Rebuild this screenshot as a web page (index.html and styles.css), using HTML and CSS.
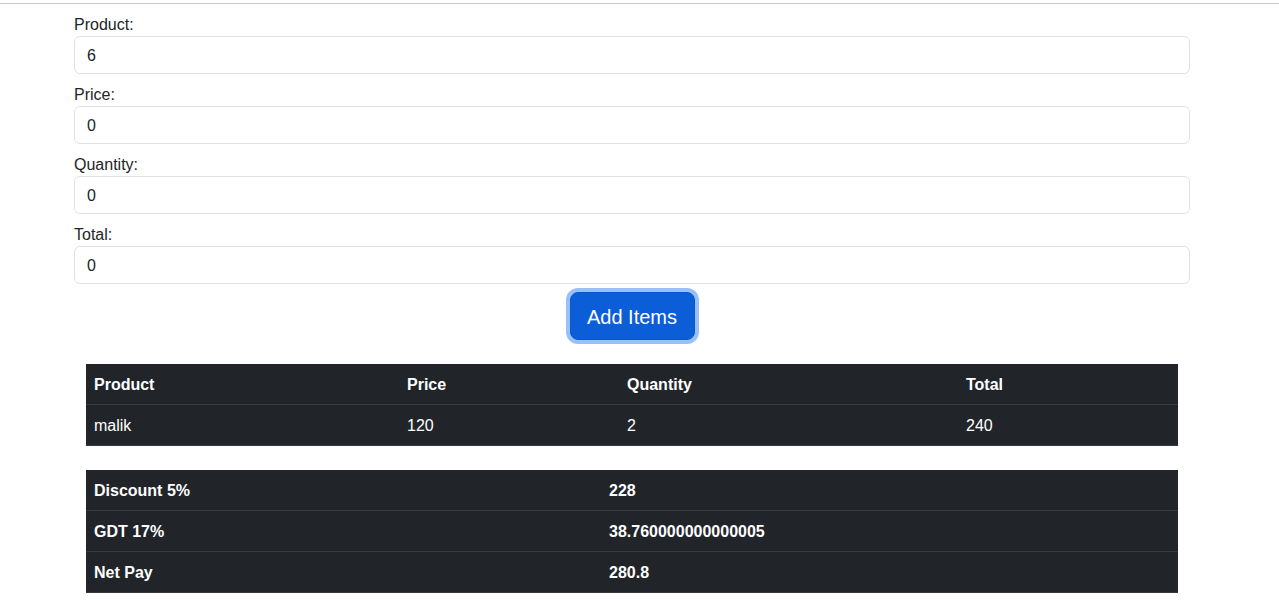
FILE: index.html
```html
<!DOCTYPE html>
<html lang="en">
<head>
<meta charset="utf-8">
<title>Items</title>
<link rel="stylesheet" href="styles.css">
</head>
<body>
<div class="topline"></div>
<div class="container">
  <form class="item-form">
    <label class="form-label" for="product">Product:</label>
    <input class="form-control" id="product" type="text" value="6">
    <label class="form-label" for="price">Price:</label>
    <input class="form-control" id="price" type="text" value="0">
    <label class="form-label" for="qty">Quantity:</label>
    <input class="form-control" id="qty" type="text" value="0">
    <label class="form-label" for="total">Total:</label>
    <input class="form-control" id="total" type="text" value="0">
    <div class="btn-row">
      <button type="button" class="btn-add">Add Items</button>
    </div>
  </form>

  <table class="table-dark items">
    <thead>
      <tr>
        <th class="c-product">Product</th>
        <th class="c-price">Price</th>
        <th class="c-qty">Quantity</th>
        <th class="c-total">Total</th>
      </tr>
    </thead>
    <tbody>
      <tr>
        <td>malik</td>
        <td>120</td>
        <td>2</td>
        <td>240</td>
      </tr>
    </tbody>
  </table>

  <table class="table-dark summary">
    <tbody>
      <tr><th class="c-label">Discount 5%</th><th>228</th></tr>
      <tr><th class="c-label">GDT 17%</th><th>38.760000000000005</th></tr>
      <tr><th class="c-label">Net Pay</th><th>280.8</th></tr>
    </tbody>
  </table>
</div>
</body>
</html>
```

FILE: styles.css
```css
* { box-sizing: border-box; }

html, body {
  margin: 0;
  padding: 0;
  background: #fff;
}

body {
  font-family: "Segoe UI", "Liberation Sans", Arial, sans-serif;
  font-size: 16px;
  line-height: 1.5;
  color: #212529;
}

.topline {
  height: 1px;
  margin-top: 3px;
  background: #c8c8c8;
}

.container {
  width: 1116px;
  margin-left: 74px;
  padding-top: 8px;
}

.item-form {
  display: flex;
  flex-direction: column;
}

.form-label {
  display: block;
  height: 24px;
  padding-top: 2px;
  line-height: 22px;
  margin-top: 8px;
}

.form-label:first-child {
  margin-top: 0;
}

.form-control {
  display: block;
  width: 100%;
  height: 38px;
  padding: 7px 12px 5px;
  font: inherit;
  color: #212529;
  background: #fff;
  border: 1px solid #dee2e6;
  border-radius: 6px;
  outline: none;
}

.btn-row {
  display: flex;
  justify-content: center;
  margin-top: 8px;
}

.btn-add {
  height: 48px;
  width: 125px;
  padding: 9px 16px 7px;
  font-family: inherit;
  font-size: 20px;
  line-height: 30px;
  color: #fff;
  background: #0b5ed7;
  border: 1px solid #0a58ca;
  border-radius: 8px;
  box-shadow: 0 0 0 4px #98c0fb;
  cursor: pointer;
}

.table-dark {
  width: 1092px;
  margin: 0 12px;
  border-collapse: collapse;
  background: #212529;
  color: #fff;
  table-layout: fixed;
}

.table-dark th,
.table-dark td {
  padding: 9px 8px 7px;
  text-align: left;
  vertical-align: top;
  border-bottom: 1px solid #373b3e;
  line-height: 24px;
}

.table-dark th {
  font-weight: 700;
}

.items {
  margin-top: 24px;
}

.c-product { width: 313px; }
.c-price { width: 220px; }
.c-qty { width: 339px; }
.c-total { width: 220px; }

.summary {
  margin-top: 24px;
}

.c-label { width: 515px; }
```
